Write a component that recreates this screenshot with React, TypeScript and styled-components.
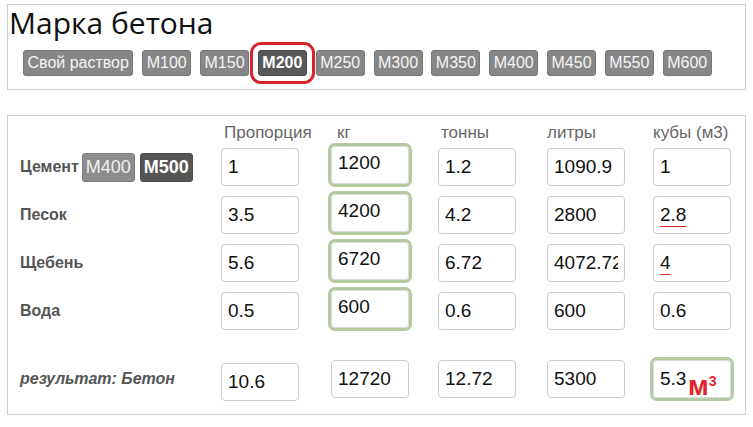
import React from "react";
import styled, { createGlobalStyle } from "styled-components";

const GlobalStyle = createGlobalStyle`
  html, body {
    margin: 0;
    padding: 0;
    background: #ffffff;
  }
  body {
    font-family: "Liberation Sans", Arial, sans-serif;
  }
`;

const grades = ["М100", "М150", "М200", "М250", "М300", "М350", "М400", "М450", "М550", "М600"];

type RowData = {
  label: string;
  cement?: boolean;
  values: string[];
  flagged?: boolean;
};

const rows: RowData[] = [
  { label: "Цемент", cement: true, values: ["1", "1200", "1.2", "1090.9", "1"] },
  { label: "Песок", values: ["3.5", "4200", "4.2", "2800", "2.8"], flagged: true },
  { label: "Щебень", values: ["5.6", "6720", "6.72", "4072.72", "4"], flagged: true },
  { label: "Вода", values: ["0.5", "600", "0.6", "600", "0.6"] },
];

const result = ["10.6", "12720", "12.72", "5300", "5.3"];

const App = () => {
  const active = "М200";

  return (
    <Page>
      <GlobalStyle />

      <Panel>
        <Title>Марка бетона</Title>
        <GradeBar>
          <Grade>Свой раствор</Grade>
          {grades.map((g) => (
            <Grade key={g} $active={g === active}>
              {g}
            </Grade>
          ))}
        </GradeBar>
      </Panel>

      <Calc>
        <HeadRow>
          <span />
          <Head>Пропорция</Head>
          <Head $indent={6}>кг</Head>
          <Head>тонны</Head>
          <Head $indent={0}>литры</Head>
          <Head $indent={0}>кубы (м3)</Head>
        </HeadRow>

        {rows.map((r) => (
          <Row key={r.label}>
            <Label>
              {r.label}
              {r.cement ? (
                <CementPick>
                  <CementBtn>М400</CementBtn>
                  <CementBtn $active>М500</CementBtn>
                </CementPick>
              ) : null}
            </Label>
            <Field readOnly value={r.values[0]} />
            <Field readOnly value={r.values[1]} $green $raised />
            <Field readOnly value={r.values[2]} />
            <Field readOnly value={r.values[3]} />
            <Cell>
              <Field readOnly value={r.values[4]} />
              {r.flagged ? <Spell>{r.values[4]}</Spell> : null}
            </Cell>
          </Row>
        ))}

        <ResultRow>
          <Label $italic>результат: Бетон</Label>
          <Field readOnly value={result[0]} $drop />
          <Field readOnly value={result[1]} />
          <Field readOnly value={result[2]} />
          <Field readOnly value={result[3]} />
          <Cell>
            <Field readOnly value={result[4]} $green />
            <Unit>
              м<sup>3</sup>
            </Unit>
          </Cell>
        </ResultRow>
      </Calc>
    </Page>
  );
};

export default App;

const Page = styled.div`
  padding: 4px 7px 0 7px;
  width: 753px;
  box-sizing: border-box;
`;

const Panel = styled.div`
  border: 1px solid #cfcfcf;
  padding: 0 0 13px 1px;
`;

const Title = styled.div`
  font-family: "Open Sans", "Liberation Sans", sans-serif;
  font-size: 30px;
  line-height: 36px;
  color: #111;
`;

const GradeBar = styled.div`
  display: flex;
  gap: 8.8px;
  margin: 9px 0 0 14px;
`;

const Grade = styled.div<{ $active?: boolean }>`
  height: 26px;
  box-sizing: border-box;
  padding: 0 3.5px;
  display: flex;
  align-items: center;
  font-size: 16px;
  color: ${(p) => (p.$active ? "#ffffff" : "#f4f4f4")};
  font-weight: ${(p) => (p.$active ? 700 : 400)};
  background: ${(p) => (p.$active ? "#585858" : "#878787")};
  border: 1px solid ${(p) => (p.$active ? "#4a4a4a" : "#777777")};
  border-radius: 3px;
  outline: ${(p) => (p.$active ? "3px solid #d8232b" : "none")};
  outline-offset: 5px;
  cursor: pointer;
`;

const Calc = styled.div`
  margin-top: 25px;
  border: 1px solid #cfcfcf;
  padding: 6px 0 11px 12px;
`;

const cols = "201px 110px 107px 109px 106px 1fr";

const HeadRow = styled.div`
  display: grid;
  grid-template-columns: ${cols};
  height: 21px;
  align-items: center;
`;

const Head = styled.div<{ $indent?: number }>`
  font-size: 17px;
  line-height: 21px;
  color: #666;
  padding-left: ${(p) => (p.$indent ?? 3)}px;
`;

const Row = styled.div`
  display: grid;
  grid-template-columns: ${cols};
  height: 48px;
  align-items: center;
`;

const ResultRow = styled(Row)`
  margin-top: 20px;
`;

const Label = styled.div<{ $italic?: boolean }>`
  display: flex;
  align-items: center;
  font-size: 16px;
  font-weight: 700;
  font-style: ${(p) => (p.$italic ? "italic" : "normal")};
  color: #555;
`;

const CementPick = styled.div`
  display: flex;
  gap: 5px;
  margin-left: 3px;
`;

const CementBtn = styled.div<{ $active?: boolean }>`
  height: 29px;
  box-sizing: border-box;
  padding: 0 3px;
  display: flex;
  align-items: center;
  font-size: 18px;
  font-weight: ${(p) => (p.$active ? 700 : 400)};
  color: ${(p) => (p.$active ? "#ffffff" : "#f0f0f0")};
  background: ${(p) => (p.$active ? "#555555" : "#8d8d8d")};
  border: 1px solid ${(p) => (p.$active ? "#4a4a4a" : "#7d7d7d")};
  border-radius: 3px;
`;

const Field = styled.input<{ $green?: boolean; $raised?: boolean; $drop?: boolean }>`
  width: 78px;
  height: 38px;
  box-sizing: border-box;
  margin: ${(p) => (p.$raised ? "0 0 4px 0" : p.$drop ? "5px 0 0 0" : "0")};
  padding: ${(p) => (p.$raised ? "0 6px 5px 6px" : "0 6px")};
  font-family: "Liberation Sans", Arial, sans-serif;
  font-size: 19px;
  color: #111;
  background: #fff;
  border: 1px solid ${(p) => (p.$green ? "#dcdcdc" : "#cccccc")};
  border-radius: 4px;
  outline: ${(p) => (p.$green ? "3px solid #b5c9a3" : "none")};
`;

const Cell = styled.div`
  position: relative;
  width: 78px;
  height: 38px;
`;

const Spell = styled.span`
  position: absolute;
  left: 7px;
  top: 0;
  height: 38px;
  line-height: 38px;
  font-size: 19px;
  color: transparent;
  text-decoration: underline;
  text-decoration-color: #d42a2a;
  text-underline-offset: 5px;
  pointer-events: none;
`;

const Unit = styled.span`
  position: absolute;
  left: 35px;
  top: 12px;
  font-size: 28px;
  line-height: 28px;
  font-weight: 700;
  color: #e2232b;
  pointer-events: none;

  sup {
    font-size: 14px;
    vertical-align: 9px;
    line-height: 0;
  }
`;
